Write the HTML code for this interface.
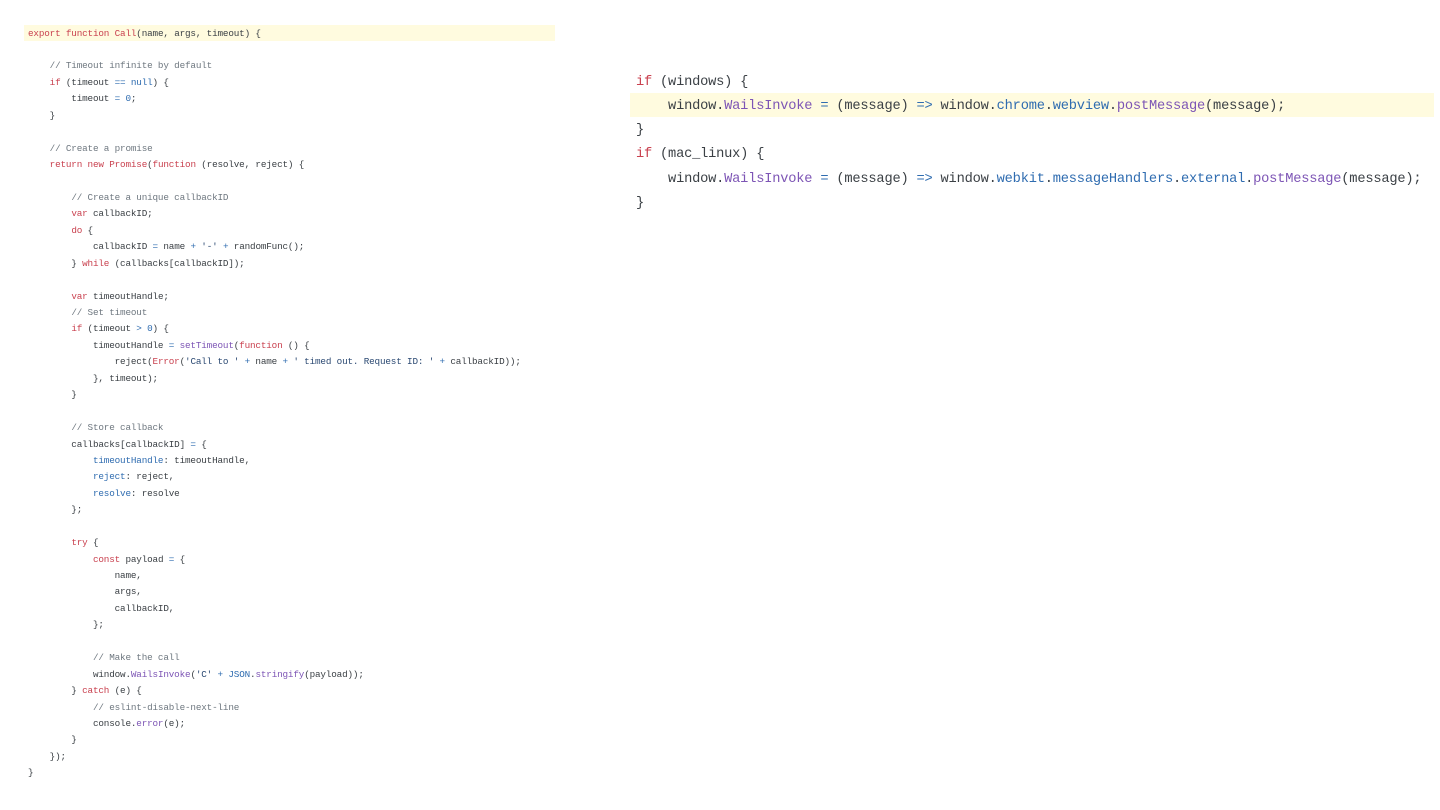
<!DOCTYPE html>
<html><head><meta charset="utf-8">
<style>
html,body{margin:0;padding:0;width:1440px;height:810px;background:#fff;overflow:hidden}
pre{position:absolute;margin:0;font-family:"Liberation Mono","DejaVu Sans Mono",monospace;color:#3b4045;white-space:pre}
.hl{position:absolute;background:#fffbdf}
#a{left:28px;top:25.6px;font-size:9.3px;letter-spacing:-.165px;line-height:16.44px;filter:blur(.3px)}
#b{left:636px;top:70.5px;font-size:13.7px;letter-spacing:-.2px;line-height:24.27px;filter:blur(.3px)}
.k{color:#c9414f}.c{color:#6f7880}.f{color:#7d55b5}.n{color:#2f6cb0}.s{color:#2c4a73}
</style></head><body>
<div class="hl" style="left:24px;top:25px;width:531px;height:16px"></div>
<div class="hl" style="left:630px;top:93px;width:804px;height:24px"></div>
<pre id="a"><span class="k">export function</span> <span class="k">Call</span>(name, args, timeout) {

    <span class="c">// Timeout infinite by default</span>
    <span class="k">if</span> (timeout <span class="n">==</span> <span class="n">null</span>) {
        timeout <span class="n">=</span> <span class="n">0</span>;
    }

    <span class="c">// Create a promise</span>
    <span class="k">return new</span> <span class="k">Promise</span>(<span class="k">function</span> (resolve, reject) {

        <span class="c">// Create a unique callbackID</span>
        <span class="k">var</span> callbackID;
        <span class="k">do</span> {
            callbackID <span class="n">=</span> name <span class="n">+</span> <span class="s">'-'</span> <span class="n">+</span> randomFunc();
        } <span class="k">while</span> (callbacks[callbackID]);

        <span class="k">var</span> timeoutHandle;
        <span class="c">// Set timeout</span>
        <span class="k">if</span> (timeout <span class="n">&gt;</span> <span class="n">0</span>) {
            timeoutHandle <span class="n">=</span> <span class="f">setTimeout</span>(<span class="k">function</span> () {
                reject(<span class="k">Error</span>(<span class="s">'Call to '</span> <span class="n">+</span> name <span class="n">+</span> <span class="s">' timed out. Request ID: '</span> <span class="n">+</span> callbackID));
            }, timeout);
        }

        <span class="c">// Store callback</span>
        callbacks[callbackID] <span class="n">=</span> {
            <span class="n">timeoutHandle</span>: timeoutHandle,
            <span class="n">reject</span>: reject,
            <span class="n">resolve</span>: resolve
        };

        <span class="k">try</span> {
            <span class="k">const</span> payload <span class="n">=</span> {
                name,
                args,
                callbackID,
            };

            <span class="c">// Make the call</span>
            window.<span class="f">WailsInvoke</span>(<span class="s">'C'</span> <span class="n">+</span> <span class="n">JSON</span>.<span class="f">stringify</span>(payload));
        } <span class="k">catch</span> (e) {
            <span class="c">// eslint-disable-next-line</span>
            console.<span class="f">error</span>(e);
        }
    });
}</pre>
<pre id="b"><span class="k">if</span> (windows) {
    window.<span class="f">WailsInvoke</span> <span class="n">=</span> (message) <span class="n">=&gt;</span> window.<span class="n">chrome</span>.<span class="n">webview</span>.<span class="f">postMessage</span>(message);
}
<span class="k">if</span> (mac_linux) {
    window.<span class="f">WailsInvoke</span> <span class="n">=</span> (message) <span class="n">=&gt;</span> window.<span class="n">webkit</span>.<span class="n">messageHandlers</span>.<span class="n">external</span>.<span class="f">postMessage</span>(message);
}</pre>
</body></html>
